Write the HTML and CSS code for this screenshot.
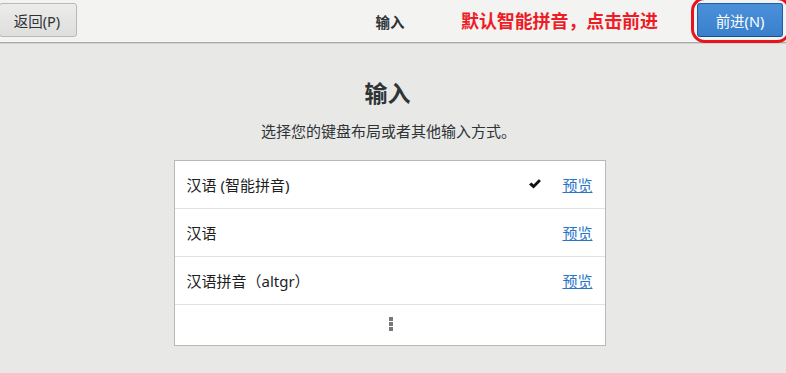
FILE: index.html
```html
<!DOCTYPE html>
<html lang="zh">
<head>
<meta charset="utf-8">
<title>输入</title>
<link rel="stylesheet" href="styles.css">
</head>
<body>
<header class="header">
  <div class="left"><button class="btn btn-back">返回(P)</button></div>
  <div class="htitle">输入</div>
  <div class="right"><button class="btn btn-next">前进(N)</button></div>
  <div class="note">默认智能拼音，点击前进</div>
  <div class="ring"></div>
</header>
<main class="main">
  <h1 class="title">输入</h1>
  <p class="sub">选择您的键盘布局或者其他输入方式。</p>
  <div class="list">
    <div class="row">
      <span class="name">汉语 (智能拼音)</span>
      <svg class="check" width="12" height="10" viewBox="0 0 12 10"><path d="M0 5.4 L2.4 3.4 L4.6 5.6 L9.8 0.2 L12 2 L4.6 9.4 Z" fill="#111111"/></svg>
      <a class="preview" href="#">预览</a>
    </div>
    <div class="row">
      <span class="name">汉语</span>
      <a class="preview" href="#">预览</a>
    </div>
    <div class="row">
      <span class="name">汉语拼音（altgr）</span>
      <a class="preview" href="#">预览</a>
    </div>
    <div class="row more">
      <span class="dots"><i></i><i></i><i></i></span>
    </div>
  </div>
</main>
</body>
</html>
```
FILE: styles.css
```css
* { box-sizing: border-box; }
html, body { margin: 0; padding: 0; }
body {
  width: 786px;
  height: 373px;
  overflow: hidden;
  background: #e8e8e7;
  font-family: "Noto Sans", "Noto Sans CJK SC", sans-serif;
  color: #2e3436;
}
.header {
  position: relative;
  height: 43px;
  background: #f3f3f2;
  border-bottom: 1px solid #a9aaa8;
  box-shadow: 0 1px 0 #d2d2d0;
  display: grid;
  grid-template-columns: 1fr auto 1fr;
  align-items: start;
}
.left { display: flex; }
.right { display: flex; justify-content: flex-end; }
.btn {
  height: 34px;
  margin-top: 3px;
  font-family: "Noto Sans", "Noto Sans CJK SC", sans-serif;
  font-size: 14.5px;
  border-radius: 3px;
  padding: 0;
}
.btn-back {
  width: 78px;
  margin-left: -1px;
  padding-right: 2px;
  color: #2e3436;
  background: linear-gradient(#ececeb, #dededd);
  border: 1px solid #b9b9b6;
}
.btn-next {
  width: 86px;
  margin-right: 3px;
  color: #ffffff;
  background: linear-gradient(#4a90d9, #3a7fcb);
  border: 1px solid #1d5ea8;
  border-bottom-color: #174e8e;
}
.htitle {
  padding-top: 11px;
  font-size: 14.5px;
  font-weight: bold;
  color: #2e3436;
  margin-left: -6px;
}
.note {
  position: absolute;
  left: 461px;
  top: 9px;
  font-size: 18px;
  font-weight: bold;
  color: #ee1c25;
  line-height: 24px;
  letter-spacing: -0.1px;
}
.ring {
  position: absolute;
  left: 691px;
  top: -3px;
  width: 100px;
  height: 46px;
  border: 3px solid #e8141c;
  border-radius: 14px;
}
.main {
  display: flex;
  flex-direction: column;
  align-items: center;
  padding-right: 7px;
}
.title {
  margin: 34px 0 0;
  font-size: 23px;
  line-height: 32px;
  font-weight: bold;
  color: #2e3436;
  margin-right: 4px;
}
.sub {
  margin: 12px 0 0;
  font-size: 15px;
  line-height: 20px;
  color: #2e3436;
  margin-right: 2px;
}
.list {
  margin-top: 19px;
  width: 432px;
  background: #ffffff;
  border: 1px solid #b8b8b5;
  display: flex;
  flex-direction: column;
}
.row {
  height: 48px;
  display: flex;
  align-items: center;
  padding: 0 12px 0 12px;
  border-bottom: 1px solid #e1e1df;
  font-size: 15px;
  color: #1e1e1e;
}
.row .name { flex: 1; }
.check { margin-right: 21px; margin-top: -2px; }
.preview {
  color: #2a76c6;
  text-decoration: underline;
  font-size: 15px;
}
.row.more {
  height: 40px;
  border-bottom: none;
  justify-content: center;
}
.dots {
  display: flex;
  flex-direction: column;
  gap: 1px;
  margin-left: 2px;
  margin-top: -2px;
}
.dots i {
  display: block;
  width: 4px;
  height: 4px;
  background: #777777;
}
```
